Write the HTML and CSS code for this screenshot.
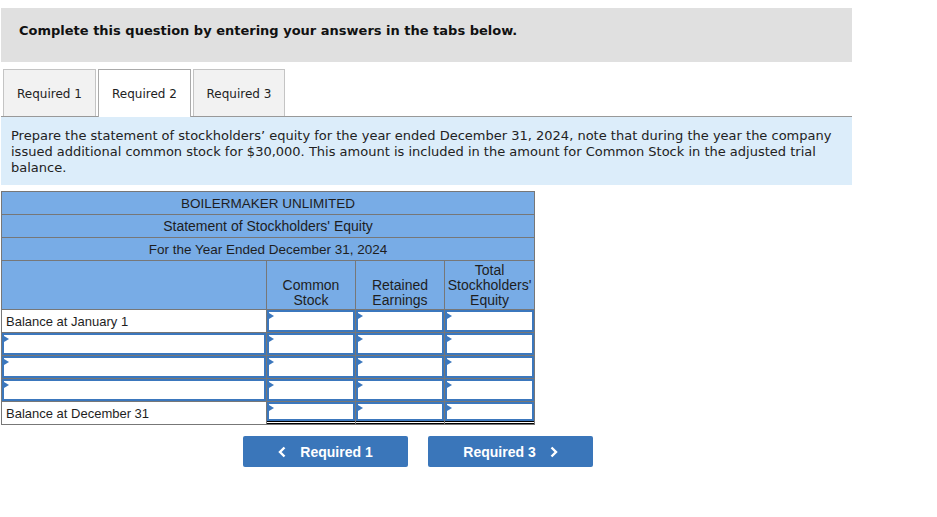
FILE: index.html
```html
<!DOCTYPE html>
<html>
<head>
<meta charset="utf-8">
<link rel="stylesheet" href="styles.css">
</head>
<body>
<div class="wrap">
  <div class="banner">Complete this question by entering your answers in the tabs below.</div>
  <div class="tabs">
    <div class="tab">Required 1</div>
    <div class="tab active">Required 2</div>
    <div class="tab">Required 3</div>
  </div>
  <div class="instr">Prepare the statement of stockholders’ equity for the year ended December 31, 2024, note that during the year the company issued additional common stock for $30,000. This amount is included in the amount for Common Stock in the adjusted trial balance.</div>
  <table class="stmt">
    <colgroup><col class="c0"><col class="c1"><col class="c2"><col class="c3"></colgroup>
    <tr class="title"><td colspan="4">BOILERMAKER UNLIMITED</td></tr>
    <tr class="title"><td colspan="4" class="wide">Statement of Stockholders' Equity</td></tr>
    <tr class="title"><td colspan="4">For the Year Ended December 31, 2024</td></tr>
    <tr class="head"><td></td><td>Common<br>Stock</td><td>Retained<br>Earnings</td><td><div class="clip">Total<br>Stockholders'<br>Equity</div></td></tr>
    <tr class="row"><td class="label">Balance at January 1</td><td class="in"><div class="box"></div></td><td class="in"><div class="box"></div></td><td class="in"><div class="box"></div></td></tr>
    <tr class="row"><td class="in"><div class="box"></div></td><td class="in"><div class="box"></div></td><td class="in"><div class="box"></div></td><td class="in"><div class="box"></div></td></tr>
    <tr class="row"><td class="in"><div class="box"></div></td><td class="in"><div class="box"></div></td><td class="in"><div class="box"></div></td><td class="in"><div class="box"></div></td></tr>
    <tr class="row"><td class="in"><div class="box"></div></td><td class="in"><div class="box"></div></td><td class="in"><div class="box"></div></td><td class="in"><div class="box"></div></td></tr>
    <tr class="row last"><td class="label">Balance at December 31</td><td class="in"><div class="box short"></div><div class="dline"></div></td><td class="in"><div class="box short"></div><div class="dline"></div></td><td class="in"><div class="box short"></div><div class="dline"></div></td></tr>
  </table>
  <div class="nav">
    <div class="btn"><svg class="chev" width="8" height="12" viewBox="0 0 8 12"><path d="M6.5 1.5 L2 6 L6.5 10.5" fill="none" stroke="#fff" stroke-width="2.4"/></svg><span>Required 1</span></div>
    <div class="btn"><span>Required 3</span><svg class="chev" width="8" height="12" viewBox="0 0 8 12"><path d="M1.5 1.5 L6 6 L1.5 10.5" fill="none" stroke="#fff" stroke-width="2.4"/></svg></div>
  </div>
</div>
</body>
</html>
```
FILE: styles.css
```css
body { margin: 0; background: #fff; }
.wrap { width: 851px; margin-left: 1px; padding-top: 8px; }
.banner {
  background: #e0e0e0; height: 54px; box-sizing: border-box;
  padding: 15px 0 0 18px;
  font: bold 13px "DejaVu Sans", Verdana, sans-serif; color: #111;
}
.tabs { display: flex; gap: 2px; margin-top: 7px; padding-left: 2px; border-bottom: 1px solid #999; height: 47px; }
.tab {
  width: 93px; height: 47px; box-sizing: border-box; padding-top: 1px;
  background: #f2f2f2; border: 1px solid #c4c4c4; border-bottom: none;
  font: 12px "DejaVu Sans", Verdana, sans-serif; color: #222;
  display: flex; align-items: center; justify-content: center;
}
.tab.active { background: #fff; height: 48px; border-color: #aaa; margin-bottom: -1px; padding-top: 0; }
.tab:last-child { width: 92px; }
.instr {
  background: #dcedfa; padding: 11px 10px 0 10px; height: 68px; box-sizing: border-box;
  font: 13px/16px "DejaVu Sans", Verdana, sans-serif; color: #222;
}
.stmt {
  margin-top: 6px; border-collapse: collapse; width: 534px; table-layout: fixed;
  font: 13px "Liberation Sans", Arial, sans-serif; color: #1e1e1e;
}
.c0 { width: 265px; } .c1 { width: 89px; } .c2 { width: 89px; } .c3 { width: 90px; }
.stmt td { border: 1px solid #777; padding: 0; }
.title td { background: #78ace6; height: 22px; text-align: center; font-size: 13.5px; }
.title td.wide { font-size: 14px; }
.head td { background: #78ace6; height: 47px; text-align: center; vertical-align: bottom; line-height: 15px; padding-bottom: 1px; font-size: 14px; }
.clip { overflow: hidden; white-space: nowrap; }
.row td { height: 22px; background: #fff; }
.label { padding-left: 4px !important; }
.box {
  height: 22px; box-sizing: border-box; border: 2px solid #3b77bd; position: relative;
}
.box.short { height: 19px; }
.dline { height: 3px; box-sizing: border-box; border-top: 1px solid #000; border-bottom: 1px solid #000; }
.box::before {
  content: ""; position: absolute; left: 0; top: 1px;
  border-left: 5px solid #3b77bd; border-top: 3px solid transparent; border-bottom: 3px solid transparent;
}
.nav { display: flex; gap: 20px; margin: 11px 0 0 242px; }
.btn {
  width: 165px; height: 31px; background: #3a76ba; border-radius: 2px; color: #fff;
  font: bold 14px "Liberation Sans", Arial, sans-serif;
  display: flex; align-items: center; justify-content: center; gap: 14px;
}
.chev { display: block; }
```
